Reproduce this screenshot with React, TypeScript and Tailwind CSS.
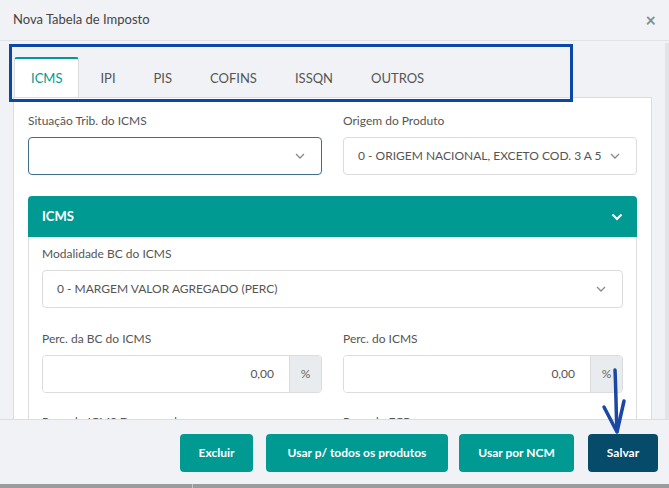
import React from 'react';

const Chevron = ({ className = '' }: { className?: string }) => (
  <svg width="10" height="6" viewBox="0 0 10 6" className={className}>
    <path d="M1 1l4 4 4-4" fill="none" stroke="currentColor" strokeWidth="1.3" />
  </svg>
);

const Label = ({ children }: { children: React.ReactNode }) => (
  <div className="text-[12px] leading-[16px] text-[#555] mb-[8px]">{children}</div>
);

const Select = ({ value = '', focused = false }: { value?: string; focused?: boolean }) => (
  <div
    className={`h-[38px] rounded-[4px] bg-white flex items-center justify-between pl-[14px] pr-[16px] text-[12px] text-[#555] ${
      focused ? 'border border-[#3e6e8c]' : 'border border-[#dcdcdc]'
    }`}
  >
    <span>{value}</span>
    <Chevron className="text-[#8a8a8a]" />
  </div>
);

const PercInput = () => (
  <div className="h-[38px] flex rounded-[4px] border border-[#dcdcdc] overflow-hidden">
    <div className="flex-1 bg-white flex items-center justify-end pr-[15px] text-[12px] text-[#555]">0,00</div>
    <div className="w-[32px] bg-[#e9ecef] border-l border-[#dcdcdc] flex items-center justify-center text-[12px] text-[#666]">
      %
    </div>
  </div>
);

const tabs = ['ICMS', 'IPI', 'PIS', 'COFINS', 'ISSQN', 'OUTROS'];

export default function App() {
  return (
    <div
      className="relative w-[669px] h-[488px] bg-[#f1f2f6] flex flex-col overflow-hidden"
      style={{ fontFamily: 'Lato, "Liberation Sans", sans-serif' }}
    >
      {/* header */}
      <div className="h-[41px] shrink-0 border-b border-[#e0e2e6] flex items-center justify-between pl-[13px] pr-[13px]">
        <span className="text-[13px] text-[#444]">Nova Tabela de Imposto</span>
        <span className="text-[18px] font-bold text-[#8a8a8a] leading-none">×</span>
      </div>

      {/* body */}
      <div className="flex-1 flex overflow-hidden">
        <div className="flex-1 pl-[13px] pr-[13px] pt-[16px] overflow-hidden">
          <div className="flex gap-[4px] pl-[1px]">
            {tabs.map((t, i) =>
              i === 0 ? (
                <div
                  key={t}
                  className="h-[40px] px-[16px] pt-[2px] bg-white border border-[#dcdcdc] border-t-2 border-t-[#009a93] border-b-0 rounded-t-[3px] -mb-px relative z-10 flex items-center text-[13px] text-[#009a93]"
                >
                  {t}
                </div>
              ) : (
                <div key={t} className="h-[40px] px-[17px] pt-[3px] flex items-center text-[13px] text-[#555]">
                  {t}
                </div>
              )
            )}
          </div>

          <div className="bg-white border border-[#dcdcdc] px-[14px] pt-[15px] h-[400px]">
            <div className="grid grid-cols-2 gap-x-[21px]">
              <div>
                <Label>Situação Trib. do ICMS</Label>
                <Select focused />
              </div>
              <div>
                <Label>Origem do Produto</Label>
                <Select value="0 - ORIGEM NACIONAL, EXCETO COD. 3 A 5" />
              </div>
            </div>

            <div className="mt-[21px]">
              <div className="h-[41px] bg-[#009a93] rounded-t-[4px] flex items-center justify-between pl-[14px] pr-[14px]">
                <span className="text-[13px] font-bold text-white">ICMS</span>
                <svg width="12" height="8" viewBox="0 0 12 8">
                  <path d="M1.5 1.5l4.5 4.5 4.5-4.5" fill="none" stroke="white" strokeWidth="2.2" />
                </svg>
              </div>
              <div className="border border-t-0 border-[#dcdcdc] px-[13px] pt-[9px] pb-[20px]">
                <Label>Modalidade BC do ICMS</Label>
                <Select value="0 - MARGEM VALOR AGREGADO (PERC)" />
                <div className="grid grid-cols-2 gap-x-[21px] mt-[23px]">
                  <div>
                    <Label>Perc. da BC do ICMS</Label>
                    <PercInput />
                  </div>
                  <div>
                    <Label>Perc. do ICMS</Label>
                    <PercInput />
                  </div>
                </div>
                <div className="grid grid-cols-2 gap-x-[21px] mt-[21px]">
                  <div>
                    <Label>Perc. do ICMS Desonerado</Label>
                  </div>
                  <div>
                    <Label>Perc. do FCP</Label>
                  </div>
                </div>
              </div>
            </div>
          </div>
        </div>
        <div className="w-[4px] mt-[2px] bg-[#e2e3e6]" />
      </div>

      {/* footer */}
      <div className="h-[65px] shrink-0 border-t border-[#dcdde0] bg-[#f1f2f6] flex items-start justify-end pt-[14px] pr-[11px] relative z-10">
        <button className="h-[38px] w-[73px] rounded-[4px] bg-[#009a93] text-white text-[12px] font-bold">Excluir</button>
        <button className="h-[38px] w-[182px] ml-[13px] rounded-[4px] bg-[#009a93] text-white text-[12px] font-bold">
          Usar p/ todos os produtos
        </button>
        <button className="h-[38px] w-[115px] ml-[11px] rounded-[4px] bg-[#009a93] text-white text-[12px] font-bold">
          Usar por NCM
        </button>
        <button className="h-[38px] w-[70px] ml-[14px] rounded-[4px] bg-[#064b6a] text-white text-[12px] font-bold">
          Salvar
        </button>
      </div>
      <div className="h-[4px] shrink-0 bg-[#9c9c9c] flex">
        <div className="w-[193px] border-r border-[#c8c8c8]" />
      </div>

      {/* annotation: highlight box */}
      <div className="absolute left-[9px] top-[44px] w-[564px] h-[58px] border-[3px] border-[#0a47a9] pointer-events-none z-20" />

      {/* annotation: arrow */}
      <svg className="absolute left-[595px] top-[365px] z-20" width="40" height="72" viewBox="0 0 40 72">
        <path d="M20 5 C21 25 21 45 22 66" fill="none" stroke="#1a48a3" strokeWidth="3.5" strokeLinecap="round" />
        <path d="M9 42 L22 67 L29 36" fill="none" stroke="#1a48a3" strokeWidth="3.5" strokeLinecap="round" strokeLinejoin="round" />
      </svg>
    </div>
  );
}
